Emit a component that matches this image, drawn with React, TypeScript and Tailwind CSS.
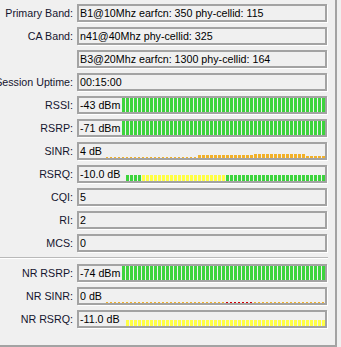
import React from 'react';

type Bar = { c: string; h: number };

const seg = (n: number, c: string, h: number): Bar[] => Array.from({ length: n }, () => ({ c, h }));

const GREEN = '#3dd43d';
const YELLOW = '#ffff44';
const ORANGE = '#f2b12a';
const RED = '#d40000';

const full = seg(51, GREEN, 14);
const sinr = [...seg(23, ORANGE, 1), ...seg(14, ORANGE, 3), ...seg(13, ORANGE, 4), ...seg(5, ORANGE, 2)];
const rsrq = [...seg(4, GREEN, 6), ...seg(21, YELLOW, 6), ...seg(25, GREEN, 6)];
const nrSinr = [...seg(30, ORANGE, 1), ...seg(7, RED, 1), ...seg(18, ORANGE, 1)];
const nrRsrq = seg(50, YELLOW, 6);

function Row({ label, value, bars }: { label?: string; value: string; bars?: Bar[] }) {
  return (
    <div className="grid grid-cols-[73px_250px] gap-x-[4px] h-[18px]">
      <div className="flex items-center justify-end whitespace-nowrap text-[#14142e]">{label}</div>
      <div className="flex items-center h-[18px] border-2 border-[#a3a3a3] shadow-[1px_1px_0_#ffffff] overflow-hidden">
        <span className="flex-none pl-[1px] whitespace-nowrap text-black">{value}</span>
        {bars && (
          <div className="flex-1 min-w-0 h-full flex justify-end items-end gap-[1px] overflow-hidden">
            {bars.map((b, i) => (
              <div key={i} className="flex-none w-[3px] flex items-end">
                {/* thin dashes are narrower so they read as a dashed line */}
                <div className={b.h === 1 ? 'w-[2px]' : 'w-[3px]'} style={{ height: b.h, backgroundColor: b.c }} />
              </div>
            ))}
          </div>
        )}
      </div>
    </div>
  );
}

export default function App() {
  return (
    <div className="w-[341px] h-[347px] bg-[#f0f0f0] overflow-hidden font-['Liberation_Sans',Arial,sans-serif] text-[10.7px]">
      <div className="w-[337px] h-[347px] border-r-2 border-b-2 border-r-[#a3a3a3] border-b-[#a3a3a3] flex flex-col gap-[5px] pt-[4px]">
        <Row label="Primary Band:" value="B1@10Mhz earfcn: 350 phy-cellid: 115" />
        <Row label="CA Band:" value="n41@40Mhz phy-cellid: 325" />
        <Row value="B3@20Mhz earfcn: 1300 phy-cellid: 164" />
        <Row label="Session Uptime:" value="00:15:00" />
        <Row label="RSSI:" value="-43 dBm" bars={full} />
        <Row label="RSRP:" value="-71 dBm" bars={full} />
        <Row label="SINR:" value="4 dB" bars={sinr} />
        <Row label="RSRQ:" value="-10.0 dB" bars={rsrq} />
        <Row label="CQI:" value="5" />
        <Row label="RI:" value="2" />
        <Row label="MCS:" value="0" />
        <div className="w-[328px] h-[2px] border-t border-[#b9b9b9] bg-white" />
        <Row label="NR RSRP:" value="-74 dBm" bars={full} />
        <Row label="NR SINR:" value="0 dB" bars={nrSinr} />
        <Row label="NR RSRQ:" value="-11.0 dB" bars={nrRsrq} />
      </div>
    </div>
  );
}
